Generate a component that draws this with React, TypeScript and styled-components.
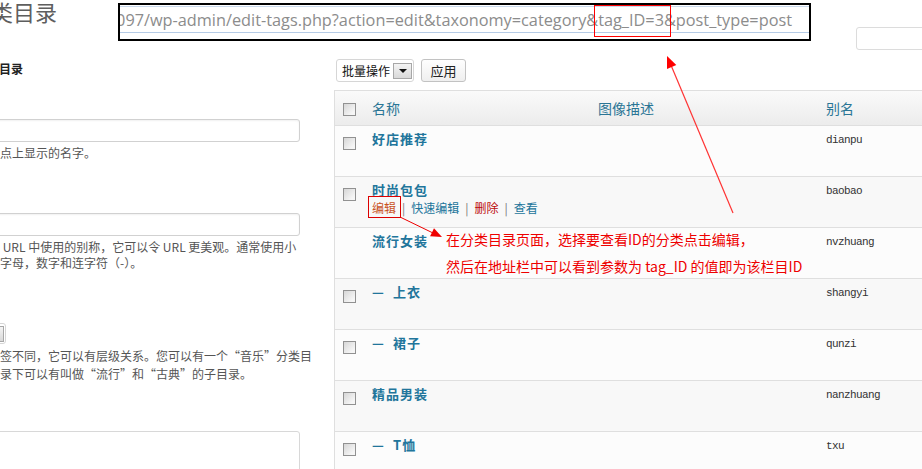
import React from 'react';
import styled, { createGlobalStyle } from 'styled-components';

const CJK = `"Noto Sans CJK SC", "Liberation Sans", sans-serif`;

const GlobalStyle = createGlobalStyle`
  html, body { margin: 0; padding: 0; background: #fff; }
  body { font-family: ${CJK}; color: #333; }
  * { box-sizing: border-box; }
`;

const Screen = styled.div`
  position: relative;
  width: 922px;
  height: 469px;
  overflow: hidden;
  background: #fff;
`;

const Wrap = styled.div`
  margin-left: -72px;
  width: 1108px;
`;

const PageTitle = styled.h2`
  margin: 0;
  height: 22px;
  padding-left: 41px;
  font: 400 22px/22px ${CJK};
  color: #5e5e5e;
`;

const Columns = styled.div`
  display: flex;
  gap: 34px;
  align-items: flex-start;
`;

const LeftCol = styled.div`
  width: 372px;
  flex: none;
  display: flex;
  flex-direction: column;
`;

const RightCol = styled.div`
  width: 702px;
  flex: none;
  display: flex;
  flex-direction: column;
`;

const FormTitle = styled.h3`
  margin: 39px 0 0;
  padding-left: 11px;
  font: 700 12px/16px ${CJK};
  color: #222;
`;

const Field = styled.div<{ $gap: number }>`
  margin-top: ${(p) => p.$gap}px;
  display: flex;
  flex-direction: column;
  align-items: flex-start;
`;

const Label = styled.label`
  font: 12px/16px ${CJK};
  color: #333;
`;

const TextInput = styled.input`
  margin-top: 4px;
  width: 372px;
  height: 23px;
  border: 1px solid #d1d1d1;
  border-radius: 3px;
  background: #fff;
  box-shadow: inset 0 1px 2px rgba(0, 0, 0, 0.06);
  padding: 0 4px;
`;

const TextArea = styled.textarea`
  margin-top: 4px;
  width: 372px;
  height: 80px;
  border: 1px solid #d8d8d8;
  border-radius: 3px;
  background: #fff;
  resize: none;
`;

const Help = styled.p<{ $lh: number }>`
  margin: 3px 0 0;
  font: 12px/${(p) => p.$lh}px ${CJK};
  color: #555;
  white-space: nowrap;
`;

const SelectBox = styled.div<{ $w: number }>`
  width: ${(p) => p.$w}px;
  height: 23px;
  border: 1px solid #d6d6d6;
  border-radius: 3px;
  background: #fff;
  display: flex;
  align-items: center;
  justify-content: space-between;
  padding: 0 1px 0 5px;
  font: 12px/16px ${CJK};
  color: #111;
  white-space: nowrap;
`;

const ParentSelect = styled(SelectBox)`
  margin-top: 4px;
  height: 21px;
`;

const ArrowBtn = styled.span`
  flex: none;
  width: 19px;
  height: 16px;
  border: 1px solid #a7a7a7;
  background: linear-gradient(#f4f4f4, #d9d9d9);
  display: flex;
  align-items: center;
  justify-content: center;
  &::after {
    content: '';
    border-left: 4px solid transparent;
    border-right: 4px solid transparent;
    border-top: 4px solid #111;
  }
`;

const SearchRow = styled.div`
  margin-top: 5px;
  display: flex;
  justify-content: flex-end;
`;

const SearchInput = styled.input`
  width: 180px;
  height: 23px;
  border: 1px solid #dcdcdc;
  border-radius: 3px;
  background: #fff;
`;

const TableNav = styled.div`
  margin-top: 9px;
  padding-left: 2px;
  display: flex;
  align-items: center;
  gap: 7px;
`;

const Button = styled.button`
  width: 45px;
  height: 23px;
  border: 1px solid #c2c2c2;
  border-radius: 3px;
  background: linear-gradient(#fefefe, #efefef);
  font: 13px/16px ${CJK};
  color: #222;
  padding: 0;
`;

const Table = styled.div`
  margin-top: 8px;
  border-left: 1px solid #dfdfdf;
  border-top: 1px solid #dfdfdf;
`;

const Grid = `
  display: grid;
  grid-template-columns: 30px 226px 228px 1fr;
`;

const HeadRow = styled.div`
  ${Grid}
  height: 35px;
  align-items: center;
  border-bottom: 1px solid #dfdfdf;
  background: linear-gradient(#fafafa, #ececec);
`;

const HeadCell = styled.div`
  padding: 0 7px;
  font: 14px/18px ${CJK};
  color: #2a7595;
`;

const Row = styled.div<{ $alt: boolean }>`
  ${Grid}
  height: 51px;
  align-items: start;
  border-bottom: 1px solid #dfdfdf;
  background: ${(p) => (p.$alt ? '#f8f8f8' : '#fcfcfc')};
`;

const CheckCell = styled.div<{ $head?: boolean }>`
  padding: ${(p) => (p.$head ? '2px 0 0 8px' : '11px 0 0 8px')};
`;

const Check = styled.span`
  display: block;
  width: 13px;
  height: 13px;
  border: 1px solid #919191;
  background: linear-gradient(135deg, #d6d6d6, #f6f6f6 80%);
`;

const NameCell = styled.div`
  padding: 4px 7px 0;
`;

const RowTitle = styled.a`
  display: block;
  font: 700 13px/18px ${CJK};
  letter-spacing: 1px;
  color: #21759b;
  text-decoration: none;
`;

const Dash = styled.span`
  display: inline-block;
  width: 21px;
  letter-spacing: 0;
`;

const Actions = styled.div`
  display: flex;
  font: 12px/18px ${CJK};
`;

const ActionLink = styled.a<{ $tone: 'edit' | 'link' | 'delete' }>`
  color: ${(p) => (p.$tone === 'edit' ? '#c9531f' : p.$tone === 'delete' ? '#bc0b0b' : '#21759b')};
  text-decoration: none;
`;

const Sep = styled.span`
  color: #777;
  padding: 0 6px;
`;

const SlugCell = styled.div`
  grid-column: 4;
  padding: 5px 7px 0;
  font: 11px/18px "Liberation Mono", monospace;
  letter-spacing: -0.6px;
  color: #333;
`;

/* ---- screenshot annotations (overlays) ---- */

const UrlBar = styled.div`
  position: absolute;
  left: 118px;
  top: 3px;
  width: 693px;
  height: 38px;
  border: 2px solid #000;
  background: #fff;
  padding: 1px 0 6px;
`;

const UrlField = styled.div`
  height: 27px;
  border-top: 1px solid #c9d9ec;
  border-bottom: 1px solid #b5cbe6;
  display: flex;
  justify-content: flex-end;
  align-items: center;
  clip-path: inset(-12px 0 -12px 0);
  padding-right: 17px;
`;

const UrlText = styled.span`
  white-space: nowrap;
  font: 16.3px/20px "Open Sans", "Liberation Sans", sans-serif;
  color: #8c8c8c;
  flex: none;
`;

const Marked = styled.span`
  position: relative;
  &::after {
    content: '';
    position: absolute;
    left: -4px;
    right: -7px;
    top: -4px;
    bottom: -6px;
    border: 1px solid #f00;
  }
`;

const Marks = styled.svg`
  position: absolute;
  left: 0;
  top: 0;
  pointer-events: none;
`;

const Note = styled.div<{ $top: number }>`
  position: absolute;
  left: 446px;
  top: ${(p) => p.$top}px;
  font: 14px/18px ${CJK};
  color: #e00;
  white-space: nowrap;
`;

type Cat = { name: string; slug: string; check: boolean; child?: boolean; actions?: boolean };

const cats: Cat[] = [
  { name: '好店推荐', slug: 'dianpu', check: true },
  { name: '时尚包包', slug: 'baobao', check: true, actions: true },
  { name: '流行女装', slug: 'nvzhuang', check: false },
  { name: '上衣', slug: 'shangyi', check: true, child: true },
  { name: '裙子', slug: 'qunzi', check: true, child: true },
  { name: '精品男装', slug: 'nanzhuang', check: true },
  { name: 'T恤', slug: 'txu', check: true, child: true },
];

export default function App() {
  return (
    <Screen>
      <GlobalStyle />
      <Wrap>
        <PageTitle>分类目录</PageTitle>
        <Columns>
          <LeftCol>
            <FormTitle>添加新分类目录</FormTitle>
            <Field $gap={22}>
              <Label>名称</Label>
              <TextInput readOnly />
              <Help $lh={16}>这将是它在站点上显示的名字。</Help>
            </Field>
            <Field $gap={32}>
              <Label>别名</Label>
              <TextInput readOnly />
              <Help $lh={16}>
                “别名”是在 URL 中使用的别称，它可以令 URL 更美观。通常使用小
                <br />
                写，只能包含字母，数字和连字符（-）。
              </Help>
            </Field>
            <Field $gap={32}>
              <Label>父级</Label>
              <ParentSelect $w={78}>
                无
                <ArrowBtn />
              </ParentSelect>
              <Help $lh={18}>
                分类目录和标签不同，它可以有层级关系。您可以有一个“音乐”分类目
                <br />
                录，在这个目录下可以有叫做“流行”和“古典”的子目录。
              </Help>
            </Field>
            <Field $gap={28}>
              <Label>描述</Label>
              <TextArea readOnly />
            </Field>
          </LeftCol>
          <RightCol>
            <SearchRow>
              <SearchInput readOnly />
            </SearchRow>
            <TableNav>
              <SelectBox $w={78}>
                批量操作
                <ArrowBtn />
              </SelectBox>
              <Button>应用</Button>
            </TableNav>
            <Table>
              <HeadRow>
                <CheckCell $head>
                  <Check />
                </CheckCell>
                <HeadCell>名称</HeadCell>
                <HeadCell>图像描述</HeadCell>
                <HeadCell>别名</HeadCell>
              </HeadRow>
              {cats.map((c, i) => (
                <Row key={c.slug} $alt={i % 2 === 1}>
                  <CheckCell>{c.check && <Check />}</CheckCell>
                  <NameCell>
                    <RowTitle>
                      {c.child && <Dash>—</Dash>}
                      {c.name}
                    </RowTitle>
                    {c.actions && (
                      <Actions>
                        <ActionLink $tone="edit">编辑</ActionLink>
                        <Sep>|</Sep>
                        <ActionLink $tone="link">快速编辑</ActionLink>
                        <Sep>|</Sep>
                        <ActionLink $tone="delete">删除</ActionLink>
                        <Sep>|</Sep>
                        <ActionLink $tone="link">查看</ActionLink>
                      </Actions>
                    )}
                  </NameCell>
                  <SlugCell>{c.slug}</SlugCell>
                </Row>
              ))}
            </Table>
          </RightCol>
        </Columns>
      </Wrap>

      <UrlBar>
        <UrlField>
          <UrlText>
            097/wp-admin/edit-tags.php?action=edit&amp;taxonomy=category&amp;<Marked>tag_ID=3</Marked>&amp;post_type=post
          </UrlText>
        </UrlField>
      </UrlBar>

      <Marks width="922" height="469" viewBox="0 0 922 469">
        <line x1="733" y1="213" x2="670.5" y2="64" stroke="#f33" strokeWidth="1.2" />
        <polygon points="667,56 676.3,65.1 667,69" fill="#f00" />
        <rect x="368.5" y="196.5" width="32" height="21" fill="none" stroke="#d00" strokeWidth="1" />
        <line x1="400" y1="217" x2="433" y2="233" stroke="#e00" strokeWidth="1" />
        <polygon points="442,237 430.1,236.3 434,228.2" fill="#e00" />
      </Marks>
      <Note $top={230}>在分类目录页面，选择要查看ID的分类点击编辑，</Note>
      <Note $top={257}>然后在地址栏中可以看到参数为 tag_ID 的值即为该栏目ID</Note>
    </Screen>
  );
}
